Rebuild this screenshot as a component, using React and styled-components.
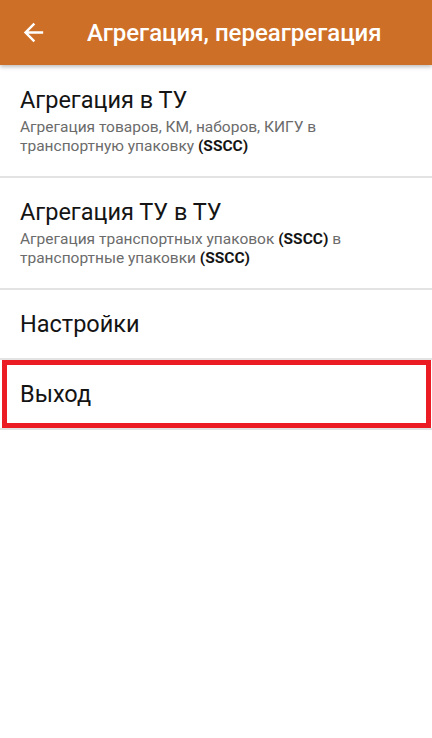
import React from "react";
import styled, { createGlobalStyle } from "styled-components";

const GlobalStyle = createGlobalStyle`
  html, body {
    margin: 0;
    padding: 0;
    background: #fff;
    font-family: Roboto, "Noto Sans", sans-serif;
  }
`;

const Screen = styled.div`
  width: 432px;
  min-height: 738px;
  background: #fff;
  display: flex;
  flex-direction: column;
`;

const Toolbar = styled.header`
  height: 65px;
  background: #ce6f27;
  display: flex;
  align-items: center;
  padding-left: 19px;
  gap: 39px;
  box-shadow: 0 2px 4px rgba(0, 0, 0, 0.25);
  position: relative;
  z-index: 1;
`;

const BackIcon = styled.svg`
  width: 29px;
  height: 29px;
  flex-shrink: 0;
`;

const Title = styled.h1`
  margin: 0;
  color: #fff;
  font-size: 24px;
  font-weight: 500;
`;

const List = styled.div`
  display: flex;
  flex-direction: column;
`;

const Item = styled.div`
  padding: ${(p) => (p.$sub ? "20.5px 20px 20px" : "20px 20px")};
  border-bottom: 2px solid #e3e3e3;
  display: flex;
  flex-direction: column;
  gap: 4px;
`;

// red annotation frame drawn over the last row
const Highlight = styled.div`
  position: relative;

  &::after {
    content: "";
    position: absolute;
    left: 2px;
    right: 1px;
    top: 0;
    bottom: 2px;
    border: 5px solid #ec1c24;
    pointer-events: none;
  }
`;

const ItemTitle = styled.div`
  font-size: 23.5px;
  line-height: 28px;
  color: #141414;
`;

const ItemText = styled.div`
  font-size: 15.5px;
  line-height: 19px;
  color: #6b6b6b;

  b {
    color: #141414;
    font-weight: 700;
  }
`;

export default function App() {
  return (
    <>
      <GlobalStyle />
      <Screen>
        <Toolbar>
          <BackIcon viewBox="0 0 24 24" fill="#fff">
            <path d="M20 11H7.83l5.59-5.59L12 4l-8 8 8 8 1.41-1.41L7.83 13H20v-2z" />
          </BackIcon>
          <Title>Агрегация, переагрегация</Title>
        </Toolbar>
        <List>
          <Item $sub>
            <ItemTitle>Агрегация в ТУ</ItemTitle>
            <ItemText>
              Агрегация товаров, КМ, наборов, КИГУ в транспортную упаковку <b>(SSCC)</b>
            </ItemText>
          </Item>
          <Item $sub>
            <ItemTitle>Агрегация ТУ в ТУ</ItemTitle>
            <ItemText>
              Агрегация транспортных упаковок <b>(SSCC)</b> в транспортные упаковки <b>(SSCC)</b>
            </ItemText>
          </Item>
          <Item>
            <ItemTitle>Настройки</ItemTitle>
          </Item>
          <Highlight>
            <Item>
              <ItemTitle>Выход</ItemTitle>
            </Item>
          </Highlight>
        </List>
      </Screen>
    </>
  );
}
